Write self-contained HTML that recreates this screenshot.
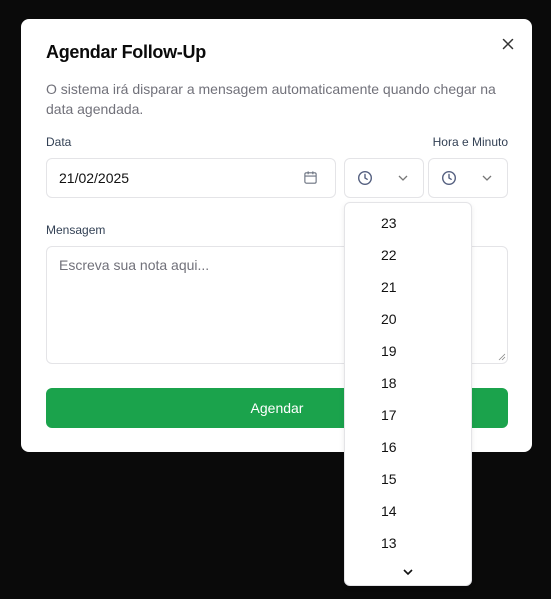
<!DOCTYPE html>
<html><head><meta charset="utf-8"><style>
*{box-sizing:border-box;margin:0;padding:0}
body{width:551px;height:599px;background:#0a0a0a;font-family:"Liberation Sans",sans-serif;position:relative;overflow:hidden}
.modal{position:absolute;left:21px;top:19px;width:511px;height:433px;background:#fff;border-radius:8px}
.a{position:absolute}
.box{position:absolute;border:1px solid #e4e4e7;border-radius:6px;background:#fff}
.lbl{font-size:12px;color:#334155}
.opt{position:absolute;left:36px;font-size:14px;color:#111}
</style></head><body>
<div class="modal">
<div class="a" style="left:25px;top:23px;font-size:18px;font-weight:bold;color:#0a0a0a;letter-spacing:-0.3px">Agendar Follow-Up</div>
<svg class="a" style="left:480px;top:18px" width="14" height="14" viewBox="0 0 14 14"><path d="M2.5 2.5L11.5 11.5M11.5 2.5L2.5 11.5" stroke="#333" stroke-width="1.5" stroke-linecap="round"/></svg>
<div class="a" style="left:25px;top:60px;width:470px;font-size:14px;line-height:20px;color:#71717a">O sistema irá disparar a mensagem automaticamente quando chegar na data agendada.</div>
<div class="a lbl" style="left:25px;top:116px">Data</div>
<div class="a lbl" style="right:24px;top:116px">Hora e Minuto</div>
<div class="box" style="left:25px;top:139px;width:290px;height:40px"></div>
<div class="a" style="left:38px;top:151px;font-size:14px;color:#111">21/02/2025</div>
<svg class="a" style="left:282px;top:151px" width="15" height="15" viewBox="0 0 16 16" fill="none" stroke="#6b7280" stroke-width="1.2"><rect x="2" y="3" width="12" height="11" rx="1.5"/><path d="M2 6.5h12M5.5 1.5v3M10.5 1.5v3"/></svg>
<div class="box" style="left:323px;top:139px;width:80px;height:40px"></div>
<div class="box" style="left:407px;top:139px;width:80px;height:40px"></div>
<svg class="a" style="left:336px;top:151px" width="16" height="16" viewBox="0 0 16 16" fill="none" stroke="#556080" stroke-width="1.4" stroke-linecap="round"><circle cx="8" cy="8" r="6.3"/><path d="M8 4.5V8l2.2 1.3"/></svg>
<svg class="a" style="left:420px;top:151px" width="16" height="16" viewBox="0 0 16 16" fill="none" stroke="#556080" stroke-width="1.4" stroke-linecap="round"><circle cx="8" cy="8" r="6.3"/><path d="M8 4.5V8l2.2 1.3"/></svg>
<svg class="a" style="left:376px;top:154px" width="12" height="10" viewBox="0 0 12 10" fill="none" stroke="#777" stroke-width="1.3"><path d="M2 3l4 4 4-4"/></svg>
<svg class="a" style="left:460px;top:154px" width="12" height="10" viewBox="0 0 12 10" fill="none" stroke="#777" stroke-width="1.3"><path d="M2 3l4 4 4-4"/></svg>
<div class="a lbl" style="left:25px;top:204px">Mensagem</div>
<div class="box" style="left:25px;top:227px;width:462px;height:118px"></div>
<div class="a" style="left:38px;top:238px;font-size:14px;color:#71717a">Escreva sua nota aqui...</div>
<svg class="a" style="left:477px;top:334px" width="8" height="8" viewBox="0 0 8 8" stroke="#888" stroke-width="0.8"><path d="M1 7L7 1M4 7L7 4"/></svg>
<div class="a" style="left:25px;top:369px;width:462px;height:40px;background:#1ba34c;border-radius:6px;color:#fff;font-size:14px;text-align:center;line-height:40px">Agendar</div>
</div>
<div class="box" style="left:344px;top:202px;width:128px;height:384px;border-radius:6px;box-shadow:0 2px 6px rgba(0,0,0,0.08)">
<div class="opt" style="top:12px">23</div>
<div class="opt" style="top:44px">22</div>
<div class="opt" style="top:76px">21</div>
<div class="opt" style="top:108px">20</div>
<div class="opt" style="top:140px">19</div>
<div class="opt" style="top:172px">18</div>
<div class="opt" style="top:204px">17</div>
<div class="opt" style="top:236px">16</div>
<div class="opt" style="top:268px">15</div>
<div class="opt" style="top:300px">14</div>
<div class="opt" style="top:332px">13</div>
<svg class="a" style="left:56px;top:364px" width="14" height="10" viewBox="0 0 14 10" fill="none" stroke="#111" stroke-width="1.6"><path d="M3 3l4 4 4-4"/></svg>
</div>
</body></html>
